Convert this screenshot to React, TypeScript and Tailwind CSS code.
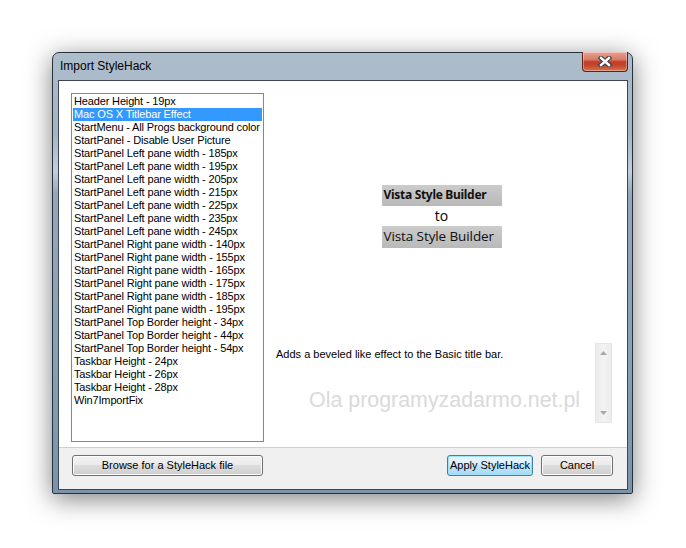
import React from "react";

const items = [
  "Header Height - 19px",
  "Mac OS X Titlebar Effect",
  "StartMenu - All Progs background color",
  "StartPanel - Disable User Picture",
  "StartPanel Left pane width - 185px",
  "StartPanel Left pane width - 195px",
  "StartPanel Left pane width - 205px",
  "StartPanel Left pane width - 215px",
  "StartPanel Left pane width - 225px",
  "StartPanel Left pane width - 235px",
  "StartPanel Left pane width - 245px",
  "StartPanel Right pane width - 140px",
  "StartPanel Right pane width - 155px",
  "StartPanel Right pane width - 165px",
  "StartPanel Right pane width - 175px",
  "StartPanel Right pane width - 185px",
  "StartPanel Right pane width - 195px",
  "StartPanel Top Border height - 34px",
  "StartPanel Top Border height - 44px",
  "StartPanel Top Border height - 54px",
  "Taskbar Height - 24px",
  "Taskbar Height - 26px",
  "Taskbar Height - 28px",
  "Win7ImportFix",
];

const ui = "font-['Liberation_Sans',Arial,sans-serif]";

const CloseButton = () => (
  <div className="absolute top-[-1px] right-[4px] w-[46px] h-[20px] rounded-b-[4px] border border-[#5b2419] border-t-0 overflow-hidden bg-[linear-gradient(180deg,#e8a392_0%,#d77a66_40%,#c23d27_52%,#c4452c_70%,#d9704f_100%)] shadow-[inset_0_0_0_1px_rgba(255,255,255,0.35)] flex items-center justify-center">
    <svg width="14" height="11" viewBox="0 0 14 11">
      <path d="M3 2 L11 9 M11 2 L3 9" stroke="#3b3f4a" strokeWidth="4.6" strokeLinecap="square" />
      <path d="M3 2 L11 9 M11 2 L3 9" stroke="#ffffff" strokeWidth="2.4" strokeLinecap="square" />
    </svg>
  </div>
);

const Button = ({ label, w, def }: { label: string; w: string; def?: boolean }) => (
  <div
    className={`${w} h-[21px] rounded-[3px] border flex items-center justify-center text-[11px] text-black ${
      def
        ? "border-[#3c7fb1] bg-[linear-gradient(180deg,#eaf6fd_0%,#d9f0fc_45%,#bee6fd_50%,#a7d9f5_100%)] shadow-[inset_0_0_0_1px_#9ee1fb]"
        : "border-[#707070] bg-[linear-gradient(180deg,#f2f2f2_0%,#ebebeb_45%,#dddddd_50%,#cfcfcf_100%)] shadow-[inset_0_0_0_1px_#fcfcfc]"
    }`}
  >
    {label}
  </div>
);

export default function App() {
  return (
    <div className={`w-[686px] h-[548px] bg-white pt-[52px] pl-[52px] overflow-hidden ${ui}`}>
      <div className="relative w-[581px] h-[442px] flex flex-col rounded-t-[7px] rounded-b-[2px] border border-[#27313c] shadow-[0_5px_26px_rgba(0,0,0,0.5)] bg-[linear-gradient(180deg,#aebdcc_0%,#a3b4c5_18%,#c3cedb_27%,#93a7bb_32%,#889fb5_70%,#7a92aa_100%)]">
        <div className="h-[27px] shrink-0 flex items-center pl-[7px] pb-[1px] text-[12px] text-black">
          Import StyleHack
        </div>
        <CloseButton />

        <div className="ml-[5px] mr-[4px] mb-[3px] flex-1 border border-[#3a4653] bg-white flex flex-col">
          <div className="h-[367px] shrink-0 border-b border-[#cfcfcf] flex pl-[12px] pt-[12px]">
            <div className="w-[193px] h-[349px] border border-[#828790] px-[1px] pt-[1px] text-[11px] text-black tracking-[-0.15px]">
              {items.map((it, i) => (
                <div
                  key={it}
                  className={`h-[13px] leading-[13px] pl-[1px] whitespace-nowrap overflow-hidden ${
                    i === 1 ? "bg-[#3399ff] text-white" : ""
                  }`}
                >
                  {it}
                </div>
              ))}
            </div>

            <div className="flex-1 flex flex-col pl-[11px] pr-[15px]">
              <div className="h-[250px] shrink-0 flex flex-col items-center justify-center pb-[4px] pr-[4px]">
                <div className="w-[120px] h-[21px] bg-[linear-gradient(180deg,#cbcbcb_0%,#b9b9b9_100%)] flex items-center pl-[2px] text-[12px] font-bold text-[#111] font-['Noto_Sans',sans-serif] tracking-[-0.3px]">
                  Vista Style Builder
                </div>
                <div className="h-[20px] flex items-center text-[14px] text-black font-['Open_Sans',sans-serif]">
                  to
                </div>
                <div className="w-[120px] h-[22px] bg-[linear-gradient(180deg,#cbcbcb_0%,#b9b9b9_100%)] flex items-center pl-[2px] text-[13.5px] text-[#111] font-['Open_Sans',sans-serif] tracking-[-0.1px] whitespace-nowrap">
                  Vista Style Builder
                </div>
              </div>

              <div className="relative h-[80px] flex">
                <div className="flex-1 pt-[3px] pl-[1px] text-[11px] text-black">
                  Adds a beveled like effect to the Basic title bar.
                </div>
                <div className="w-[17px] h-full border border-[#e6e6e6] bg-[linear-gradient(90deg,#ebebeb_0%,#f3f3f3_50%,#ececec_100%)] flex flex-col items-center justify-between py-[7px]">
                  <svg width="7" height="4" viewBox="0 0 7 4">
                    <polygon points="3.5,0 7,4 0,4" fill="#a8a8a8" />
                  </svg>
                  <svg width="7" height="4" viewBox="0 0 7 4">
                    <polygon points="0,0 7,0 3.5,4" fill="#a8a8a8" />
                  </svg>
                </div>
                <div className="absolute left-[34px] top-[45px] text-[21.4px] leading-[24px] text-[#dadada] whitespace-nowrap">
                  Ola programyzadarmo.net.pl
                </div>
              </div>
            </div>
          </div>

          <div className="flex-1 bg-[#f0f0f0] flex items-start pt-[7px] pl-[13px] pr-[14px]">
            <Button label="Browse for a StyleHack file" w="w-[191px]" />
            <div className="flex-1" />
            <Button label="Apply StyleHack" w="w-[86px]" def />
            <div className="w-[8px]" />
            <Button label="Cancel" w="w-[72px]" />
          </div>
        </div>
      </div>
    </div>
  );
}
